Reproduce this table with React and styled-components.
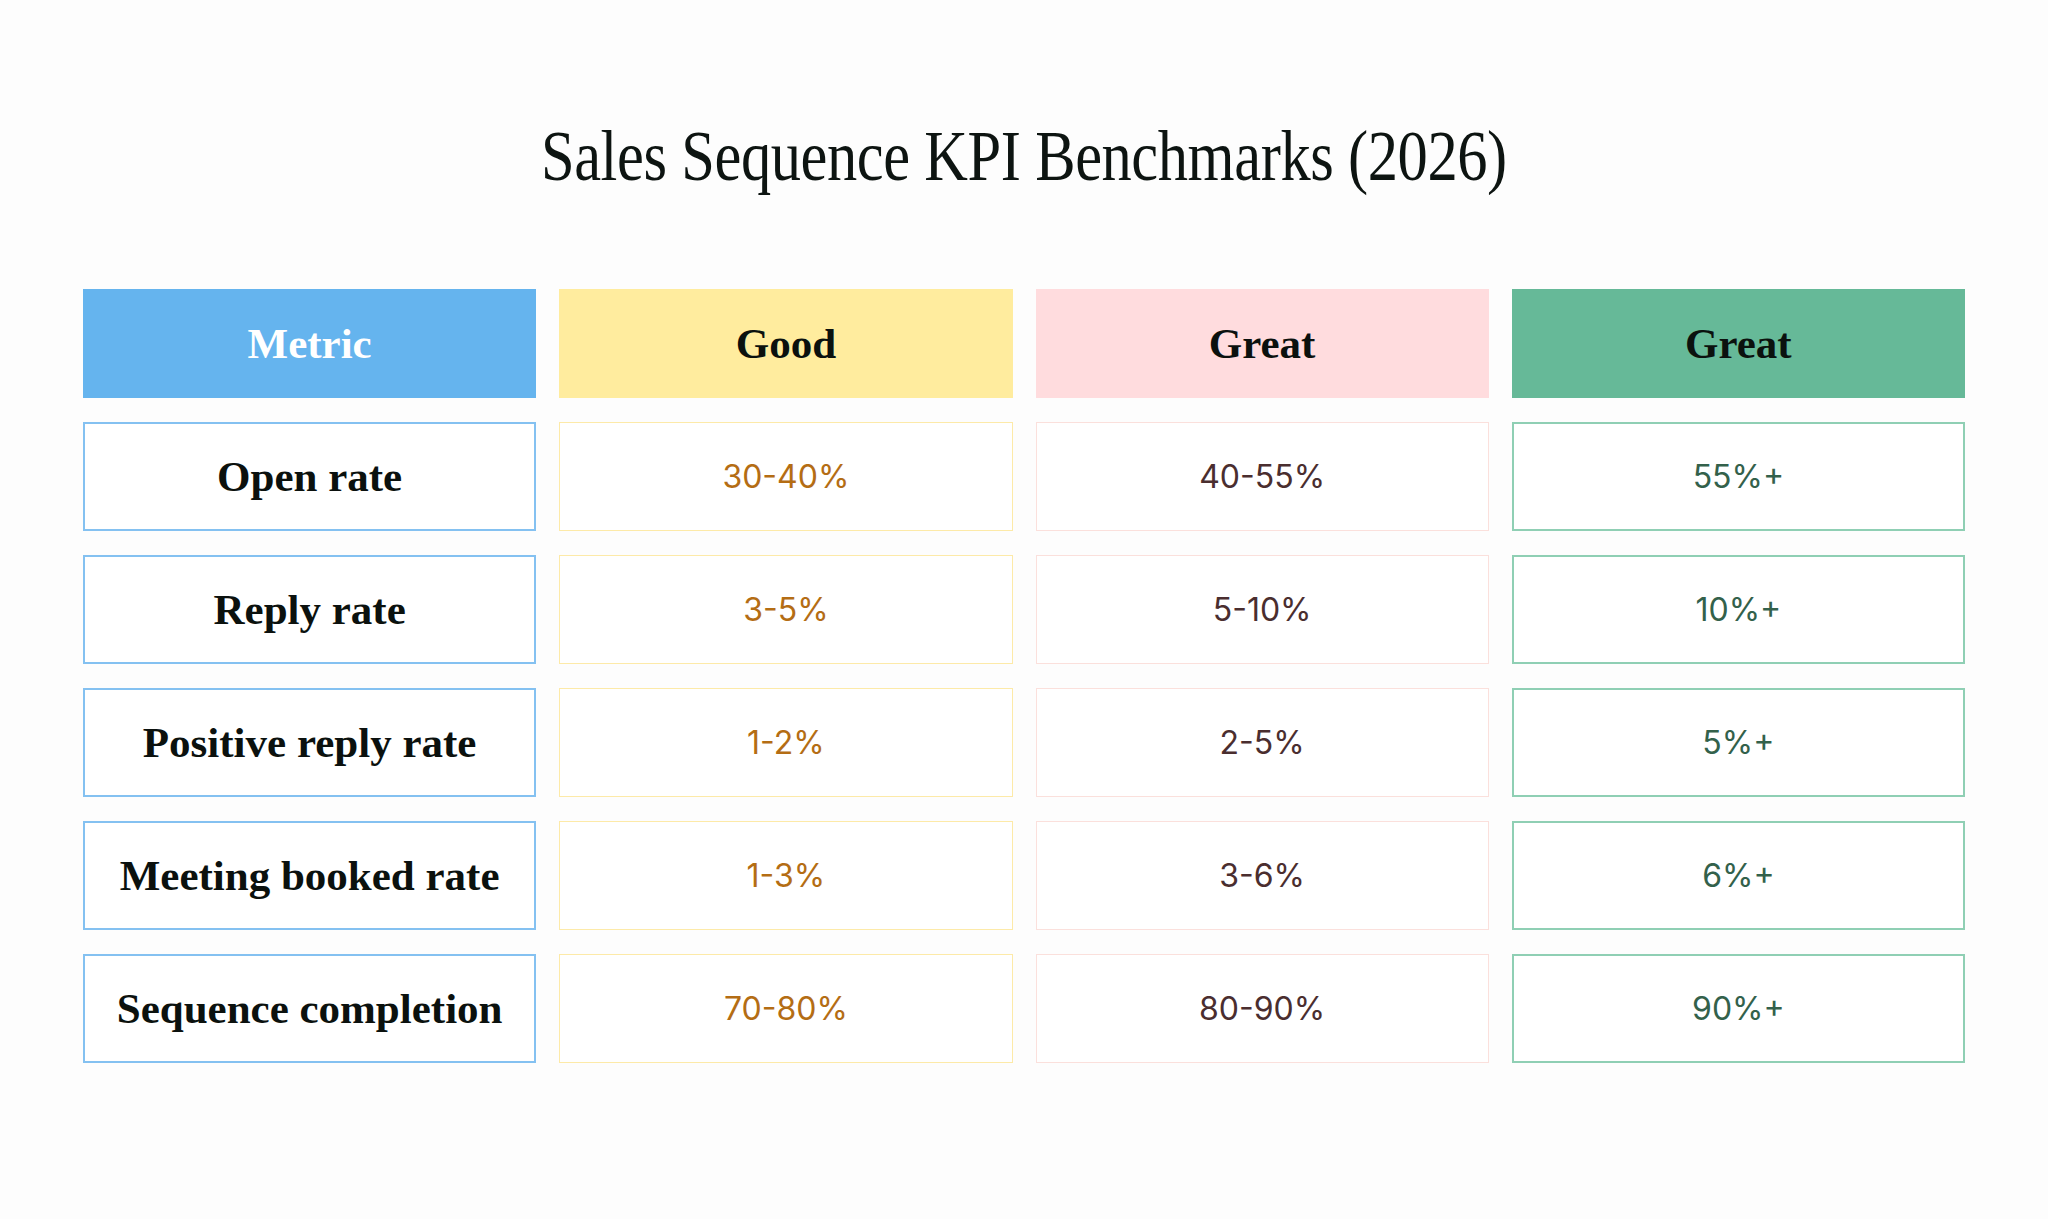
import React from "react";
import styled, { createGlobalStyle } from "styled-components";

const columns = [
  { key: "metric", label: "Metric", headBg: "#65b4ee", headColor: "#ffffff", border: "#84c1f1", borderWidth: 2, textColor: "#0b110e" },
  { key: "good", label: "Good", headBg: "#ffec9e", headColor: "#0b110e", border: "#fdeaa8", borderWidth: 1, textColor: "#b46d14" },
  { key: "great", label: "Great", headBg: "#ffdcde", headColor: "#0b110e", border: "#fbe0dc", borderWidth: 1, textColor: "#4a2e2f" },
  { key: "best", label: "Great", headBg: "#66b998", headColor: "#0b110e", border: "#8fcfb4", borderWidth: 2, textColor: "#33614b" },
];

const rows = [
  ["Open rate", "30-40%", "40-55%", "55%+"],
  ["Reply rate", "3-5%", "5-10%", "10%+"],
  ["Positive reply rate", "1-2%", "2-5%", "5%+"],
  ["Meeting booked rate", "1-3%", "3-6%", "6%+"],
  ["Sequence completion", "70-80%", "80-90%", "90%+"],
];

function App() {
  return (
    <>
      <GlobalStyle />
      <Page>
        <Title>Sales Sequence KPI Benchmarks (2026)</Title>
        <Table>
          {columns.map((col) => (
            <HeadCell key={col.key} bg={col.headBg} color={col.headColor}>
              {col.label}
            </HeadCell>
          ))}
          {rows.map((row) =>
            row.map((value, i) => {
              const col = columns[i];
              return i === 0 ? (
                <MetricCell key={row[0] + i} border={col.border} bw={col.borderWidth} color={col.textColor}>
                  {value}
                </MetricCell>
              ) : (
                <ValueCell key={row[0] + i} border={col.border} bw={col.borderWidth} color={col.textColor}>
                  {value}
                </ValueCell>
              );
            })
          )}
        </Table>
      </Page>
    </>
  );
}

const GlobalStyle = createGlobalStyle`
  html, body {
    margin: 0;
    padding: 0;
    background: #fdfdfd;
  }
  * {
    box-sizing: border-box;
  }
`;

const Page = styled.div`
  width: 100%;
  min-height: 100vh;
  background: #fdfdfd;
  display: flex;
  flex-direction: column;
  align-items: center;
  padding-top: 120px;
`;

const Title = styled.h1`
  margin: 0;
  font-family: "Liberation Serif", "DejaVu Serif", serif;
  font-weight: 400;
  font-size: 72px;
  line-height: 1;
  color: #0d1411;
  letter-spacing: -0.5px;
  transform: scaleX(0.84);
  transform-origin: center;
  white-space: nowrap;
`;

const Table = styled.div`
  margin-top: 97px;
  width: 1882px;
  display: grid;
  grid-template-columns: repeat(4, 1fr);
  column-gap: 23px;
  row-gap: 24px;
  grid-auto-rows: 109px;
`;

const Cell = styled.div`
  display: flex;
  align-items: center;
  justify-content: center;
  text-align: center;
`;

const HeadCell = styled(Cell)`
  background: ${(p) => p.bg};
  color: ${(p) => p.color};
  font-family: "Liberation Serif", "DejaVu Serif", serif;
  font-weight: 700;
  font-size: 43px;
`;

const MetricCell = styled(Cell)`
  background: #ffffff;
  border: ${(p) => p.bw}px solid ${(p) => p.border};
  color: ${(p) => p.color};
  font-family: "Liberation Serif", "DejaVu Serif", serif;
  font-weight: 700;
  font-size: 43px;
`;

const ValueCell = styled(Cell)`
  background: #ffffff;
  border: ${(p) => p.bw}px solid ${(p) => p.border};
  color: ${(p) => p.color};
  font-family: Inter, "Liberation Sans", sans-serif;
  font-weight: 400;
  font-size: 32px;
`;

export default App;
